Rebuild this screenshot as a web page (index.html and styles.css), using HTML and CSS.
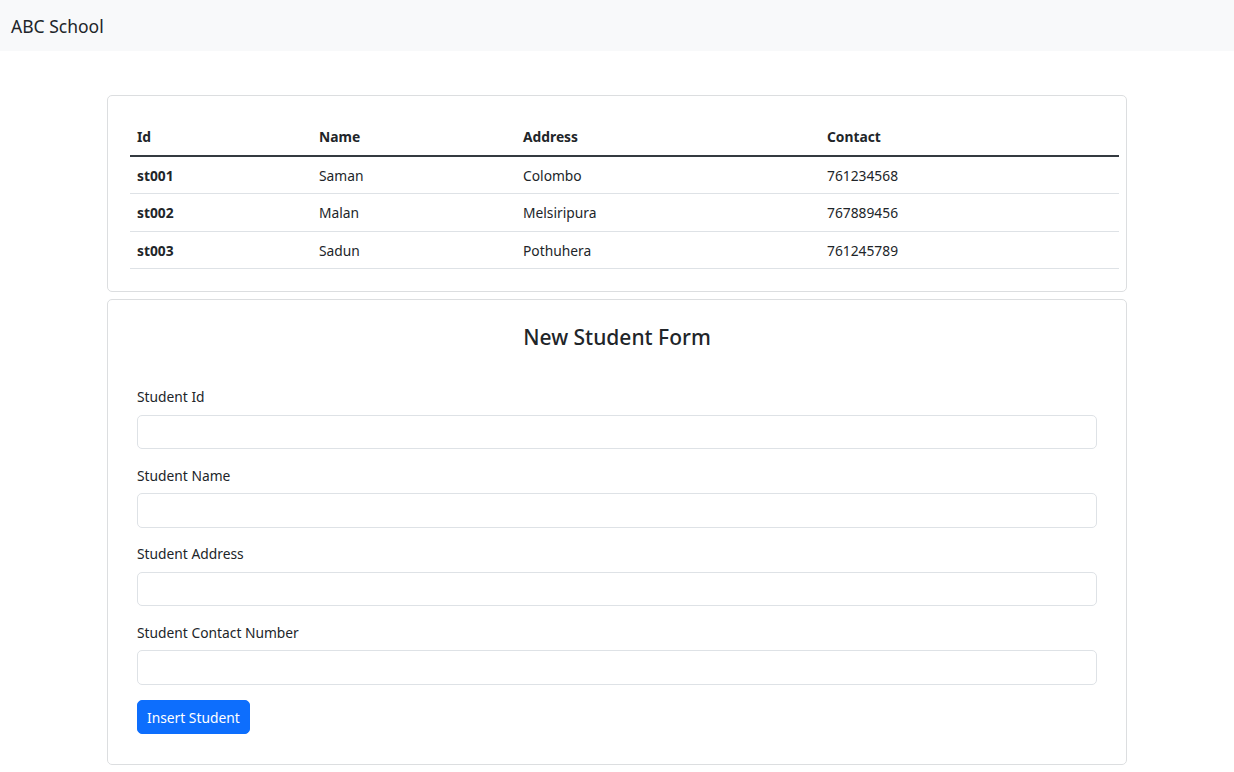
FILE: index.html
```html
<!DOCTYPE html>
<html lang="en">
<head>
<meta charset="utf-8">
<title>ABC School</title>
<link rel="stylesheet" href="styles.css">
</head>
<body>
<nav class="navbar"><span class="brand">ABC School</span></nav>
<main class="container">
  <section class="card table-card">
    <table class="students">
      <thead>
        <tr><th class="c-id">Id</th><th class="c-name">Name</th><th class="c-addr">Address</th><th class="c-contact">Contact</th></tr>
      </thead>
      <tbody>
        <tr><th>st001</th><td>Saman</td><td>Colombo</td><td>761234568</td></tr>
        <tr><th>st002</th><td>Malan</td><td>Melsiripura</td><td>767889456</td></tr>
        <tr><th>st003</th><td>Sadun</td><td>Pothuhera</td><td>761245789</td></tr>
      </tbody>
    </table>
  </section>
  <section class="card form-card">
    <h3 class="form-title">New Student Form</h3>
    <form class="form">
      <div class="field"><label for="sid">Student Id</label><input id="sid" type="text"></div>
      <div class="field"><label for="sname">Student Name</label><input id="sname" type="text"></div>
      <div class="field"><label for="saddr">Student Address</label><input id="saddr" type="text"></div>
      <div class="field"><label for="scontact">Student Contact Number</label><input id="scontact" type="text"></div>
      <button type="button" class="btn">Insert Student</button>
    </form>
  </section>
</main>
</body>
</html>
```

FILE: styles.css
```css
* { box-sizing: border-box; }
html, body { margin: 0; padding: 0; }
body {
  font-family: "Noto Sans", "Open Sans", sans-serif;
  font-size: 13.8px;
  color: #212529;
  background: #fff;
}
.navbar {
  height: 51px;
  background: #f8f9fa;
  display: flex;
  align-items: center;
  padding-left: 11px;
}
.brand { font-size: 17.5px; color: #212529; }
.container {
  width: 1020px;
  margin: 44px auto 0;
  display: flex;
  flex-direction: column;
  gap: 7px;
}
.card {
  border: 1px solid #dcdee0;
  border-radius: 5px;
  background: #fff;
}
.table-card { padding: 22px 7px 22px 22px; }
.students {
  width: 100%;
  border-collapse: collapse;
  table-layout: fixed;
}
.students th, .students td {
  text-align: left;
  padding: 8px 7px 6px;
  line-height: 22.5px;
  border-bottom: 1px solid #dee2e6;
  vertical-align: middle;
}
.students th { font-weight: 700; }
.students td { font-weight: 400; }
.students thead th { border-bottom: 2px solid #343a40; }
.c-id { width: 182px; }
.c-name { width: 204px; }
.c-addr { width: 304px; }
.form-card { padding: 24px 29px 30px 29px; }
.form-title {
  margin: 0 0 36px;
  text-align: center;
  font-size: 21px;
  font-weight: 500;
  line-height: 26px;
}
.form { display: flex; flex-direction: column; align-items: flex-start; }
.field { width: 960px; margin-bottom: 15.5px; display: flex; flex-direction: column; }
.field label { line-height: 21.6px; margin-bottom: 7px; }
.field input {
  height: 34.5px;
  border: 1px solid #dee2e6;
  border-radius: 5px;
  font: inherit;
  padding: 0 11px;
  background: #fff;
}
.btn {
  height: 34px;
  padding: 0 9px;
  white-space: nowrap;
  background: #0d6efd;
  color: #fff;
  border: 1px solid #0d6efd;
  border-radius: 5px;
  font: inherit;
  font-size: 13.8px;
}
```
